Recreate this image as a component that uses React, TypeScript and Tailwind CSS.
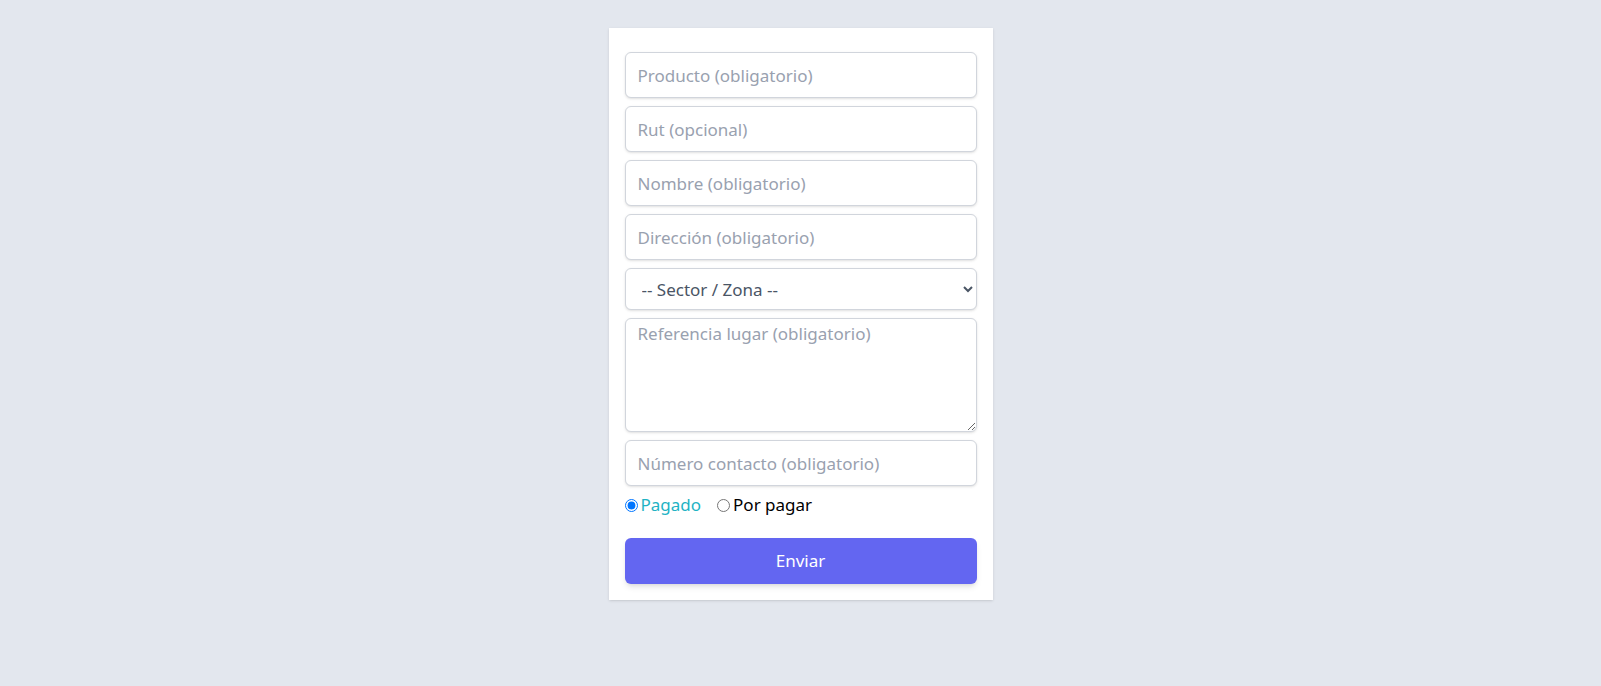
import React from "react";

export default function App() {
  const inputCls =
    "w-full h-[46px] rounded-md border border-gray-300 bg-white px-3 text-[17px] text-gray-700 placeholder:text-gray-400 shadow-sm outline-none";
  return (
    <div
      className="min-h-screen w-full bg-[#e3e7ee] flex justify-center"
      style={{ fontFamily: '"Noto Sans", "Open Sans", sans-serif' }}
    >
      <div className="mt-7 mb-7 w-96 self-start bg-white px-4 pt-6 pb-4 shadow-sm">
        <form className="flex flex-col gap-2" onSubmit={(e) => e.preventDefault()}>
          <input className={inputCls} placeholder="Producto (obligatorio)" />
          <input className={inputCls} placeholder="Rut (opcional)" />
          <input className={inputCls} placeholder="Nombre (obligatorio)" />
          <input className={inputCls} placeholder="Dirección (obligatorio)" />
          <select
            className="w-full h-[42px] rounded-md border border-gray-300 bg-white px-3 text-[17px] text-gray-600 shadow-sm outline-none"
            defaultValue=""
          >
            <option value="">-- Sector / Zona --</option>
          </select>
          <textarea
            className="w-full h-[114px] rounded-md border border-gray-300 bg-white px-3 pt-0.5 text-[17px] text-gray-700 placeholder:text-gray-400 shadow-sm outline-none"
            placeholder="Referencia lugar (obligatorio)"
          />
          <input className={inputCls} placeholder="Número contacto (obligatorio)" />
          <div className="flex items-center h-6 -mt-[1px] text-[17px]">
            <label className="flex items-center text-[#1fb3c4]">
              <input type="radio" name="pago" defaultChecked className="m-0 mr-[3px]" />
              Pagado
            </label>
            <label className="ml-4 flex items-center text-black">
              <input type="radio" name="pago" className="m-0 mr-[3px]" />
              Por pagar
            </label>
          </div>
          <button
            type="submit"
            className="mt-[13px] h-[46px] w-full rounded-md bg-[#6366f1] text-[17px] text-white shadow-md"
          >
            Enviar
          </button>
        </form>
      </div>
    </div>
  );
}
